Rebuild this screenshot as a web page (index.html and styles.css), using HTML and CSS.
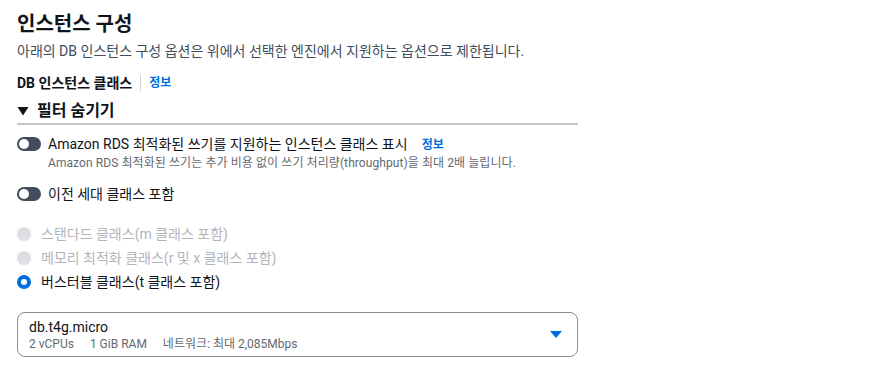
FILE: index.html
```html
<!DOCTYPE html>
<html lang="ko">
<head>
<meta charset="utf-8">
<link rel="stylesheet" href="styles.css">
</head>
<body>
<div class="page">
  <h2 class="title">인스턴스 구성</h2>
  <p class="desc">아래의 DB 인스턴스 구성 옵션은 위에서 선택한 엔진에서 지원하는 옵션으로 제한됩니다.</p>

  <div class="label-row">
    <span class="label">DB 인스턴스 클래스</span>
    <span class="sep"></span>
    <a class="info">정보</a>
  </div>

  <div class="filter-head">
    <svg class="caret-down" width="12" height="10" viewBox="0 0 12 10"><polygon points="0.5,1 11.5,1 6,9.5" fill="#0f141a"/></svg>
    <span>필터 숨기기</span>
  </div>
  <div class="divider"></div>

  <div class="toggle-row">
    <span class="toggle"><span class="knob"></span></span>
    <div class="toggle-text">
      <div class="toggle-label">Amazon RDS 최적화된 쓰기를 지원하는 인스턴스 클래스 표시<a class="info info-gap">정보</a></div>
      <div class="toggle-desc">Amazon RDS 최적화된 쓰기는 추가 비용 없이 쓰기 처리량(throughput)을 최대 2배 늘립니다.</div>
    </div>
  </div>

  <div class="toggle-row second">
    <span class="toggle"><span class="knob"></span></span>
    <div class="toggle-text">
      <div class="toggle-label">이전 세대 클래스 포함</div>
    </div>
  </div>

  <div class="radios">
    <div class="radio disabled"><span class="dot"></span><span>스탠다드 클래스(m 클래스 포함)</span></div>
    <div class="radio disabled"><span class="dot"></span><span>메모리 최적화 클래스(r 및 x 클래스 포함)</span></div>
    <div class="radio checked"><span class="dot"></span><span>버스터블 클래스(t 클래스 포함)</span></div>
  </div>

  <div class="select">
    <div class="select-text">
      <div class="select-main">db.t4g.micro</div>
      <div class="select-sub"><span>2 vCPUs</span><span>1 GiB RAM</span><span>네트워크: 최대 2,085Mbps</span></div>
    </div>
    <svg class="select-caret" width="12" height="9" viewBox="0 0 12 9"><polygon points="0,1 12,1 6,8" fill="#006ce0"/></svg>
  </div>
</div>
</body>
</html>
```

FILE: styles.css
```css
* { box-sizing: border-box; }
html, body { margin: 0; padding: 0; background: #fff; }
body {
  font-family: Roboto, "Noto Sans CJK KR", sans-serif;
  color: #0f141a;
  font-size: 14px;
  line-height: 20px;
}
.page {
  width: 578px;
  padding: 11px 0 0 17px;
}
.title {
  margin: 0;
  font-size: 20px;
  line-height: 26px;
  font-weight: 700;
}
.desc {
  margin: 4px 0 0;
  color: #414d5c;
  font-size: 14px;
  line-height: 20px;
}
.label-row {
  display: flex;
  align-items: center;
  margin-top: 12px;
  height: 20px;
}
.label { font-weight: 700; font-size: 14px; }
.sep {
  width: 1px;
  height: 16px;
  background: #d1d5db;
  margin: 0 8px 0 8px;
}
.info {
  color: #006ce0;
  font-weight: 700;
  font-size: 12px;
}
.info-gap { margin-left: 14px; }
.filter-head {
  display: flex;
  align-items: center;
  gap: 8px;
  margin-top: 8px;
  font-size: 16px;
  font-weight: 700;
  line-height: 20px;
}
.divider {
  height: 2px;
  background: #c6c6cd;
  margin-top: 2px;
}
.toggle-row {
  display: flex;
  align-items: flex-start;
  gap: 7px;
  margin-top: 9px;
}
.toggle-row.second { margin-top: 13px; }
.toggle {
  flex: none;
  width: 24px;
  height: 14px;
  border-radius: 7px;
  background: #414d5c;
  position: relative;
  margin-top: 3px;
}
.knob {
  position: absolute;
  left: 2px;
  top: 2px;
  width: 10px;
  height: 10px;
  border-radius: 50%;
  background: #fff;
}
.toggle-label { font-size: 14px; line-height: 20px; }
.toggle-desc { font-size: 12px; line-height: 16px; color: #656871; letter-spacing: 0.08px; }
.radios {
  margin-top: 20px;
  display: flex;
  flex-direction: column;
  gap: 4px;
}
.radio {
  display: flex;
  align-items: center;
  gap: 10px;
  height: 20px;
}
.radio .dot {
  flex: none;
  width: 14px;
  height: 14px;
  border-radius: 50%;
}
.radio.disabled { color: #b4b4bb; }
.radio.disabled .dot { background: #dedee3; }
.radio.checked .dot {
  border: 4px solid #006ce0;
  background: #fff;
}
.select {
  margin-top: 20px;
  height: 45px;
  border: 1px solid #8c8c94;
  border-radius: 8px;
  display: flex;
  align-items: center;
  justify-content: space-between;
  padding: 0 15px 0 11px;
}
.select-main { font-size: 14px; line-height: 18px; }
.select-sub {
  font-size: 12px;
  line-height: 16px;
  color: #656871;
  display: flex;
  gap: 16px;
}
```
